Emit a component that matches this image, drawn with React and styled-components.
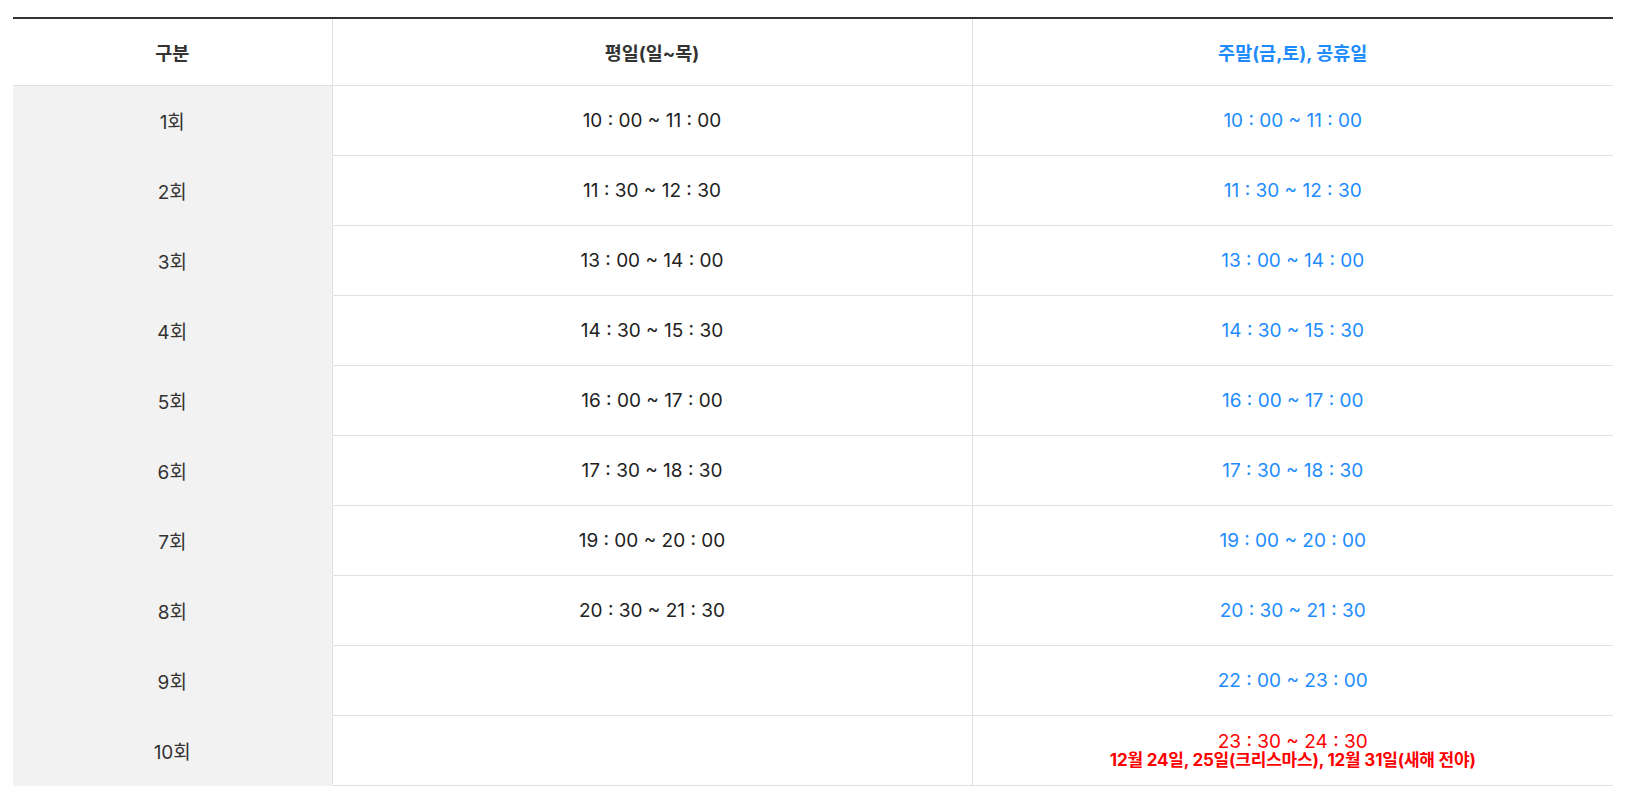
import React from "react";
import styled, { createGlobalStyle } from "styled-components";

const Global = createGlobalStyle`
  html, body { margin: 0; padding: 0; background: #fff; }
  body { font-family: Inter, "Noto Sans CJK KR", sans-serif; }
`;

const Wrap = styled.div`
  padding: 17px 33px 0 13px;
`;

const Table = styled.table`
  width: 1600px;
  border-collapse: collapse;
  table-layout: fixed;
  border-top: 2px solid #333;
`;

const Col = styled.col`
  width: ${(p) => p.$w};
`;

const Th = styled.th`
  height: 66px;
  padding: 0;
  font-size: 18.5px;
  font-weight: 700;
  color: ${(p) => (p.$blue ? "#1e8cff" : "#333")};
  text-align: center;
  vertical-align: middle;
  border-bottom: 1px solid #e0e0e0;
  border-left: ${(p) => (p.$first ? "none" : "1px solid #e0e0e0")};
  background: #fff;
`;

const Td = styled.td`
  height: 69px;
  padding: 0;
  font-size: 19px;
  font-weight: 400;
  text-align: center;
  vertical-align: middle;
  color: ${(p) => (p.$tone === "blue" ? "#1e8cff" : p.$tone === "red" ? "#ff0000" : "#222")};
  background: ${(p) => (p.$label ? "#f2f2f2" : "#fff")};
  border-bottom: ${(p) => (p.$label ? "1px solid #f2f2f2" : "1px solid #e0e0e0")};
  border-left: ${(p) => (p.$label ? "none" : "1px solid #e0e0e0")};
`;

const Label = styled.span`
  font-size: 19px;
  color: #333;
`;

const Stack = styled.div`
  display: flex;
  flex-direction: column;
  align-items: center;
  margin-top: 1px;
`;

const Time = styled.span`
  line-height: 18px;
`;

const Note = styled.span`
  font-size: 17px;
  line-height: 18px;
  font-weight: 700;
  letter-spacing: -0.2px;
`;

const rows = [
  ["1회", "10 : 00 ~ 11 : 00", "10 : 00 ~ 11 : 00"],
  ["2회", "11 : 30 ~ 12 : 30", "11 : 30 ~ 12 : 30"],
  ["3회", "13 : 00 ~ 14 : 00", "13 : 00 ~ 14 : 00"],
  ["4회", "14 : 30 ~ 15 : 30", "14 : 30 ~ 15 : 30"],
  ["5회", "16 : 00 ~ 17 : 00", "16 : 00 ~ 17 : 00"],
  ["6회", "17 : 30 ~ 18 : 30", "17 : 30 ~ 18 : 30"],
  ["7회", "19 : 00 ~ 20 : 00", "19 : 00 ~ 20 : 00"],
  ["8회", "20 : 30 ~ 21 : 30", "20 : 30 ~ 21 : 30"],
  ["9회", "", "22 : 00 ~ 23 : 00"],
];

export default function App() {
  return (
    <>
      <Global />
      <Wrap>
        <Table>
          <colgroup>
            <Col $w="319px" />
            <Col $w="640px" />
            <Col $w="641px" />
          </colgroup>
          <thead>
            <tr>
              <Th $first>구분</Th>
              <Th>평일(일~목)</Th>
              <Th $blue>주말(금,토), 공휴일</Th>
            </tr>
          </thead>
          <tbody>
            {rows.map(([label, weekday, weekend]) => (
              <tr key={label}>
                <Td $label>
                  <Label>{label}</Label>
                </Td>
                <Td>{weekday}</Td>
                <Td $tone="blue">{weekend}</Td>
              </tr>
            ))}
            <tr>
              <Td $label>
                <Label>10회</Label>
              </Td>
              <Td />
              <Td $tone="red">
                <Stack>
                  <Time>23 : 30 ~ 24 : 30</Time>
                  <Note>12월 24일, 25일(크리스마스), 12월 31일(새해 전야)</Note>
                </Stack>
              </Td>
            </tr>
          </tbody>
        </Table>
      </Wrap>
    </>
  );
}
